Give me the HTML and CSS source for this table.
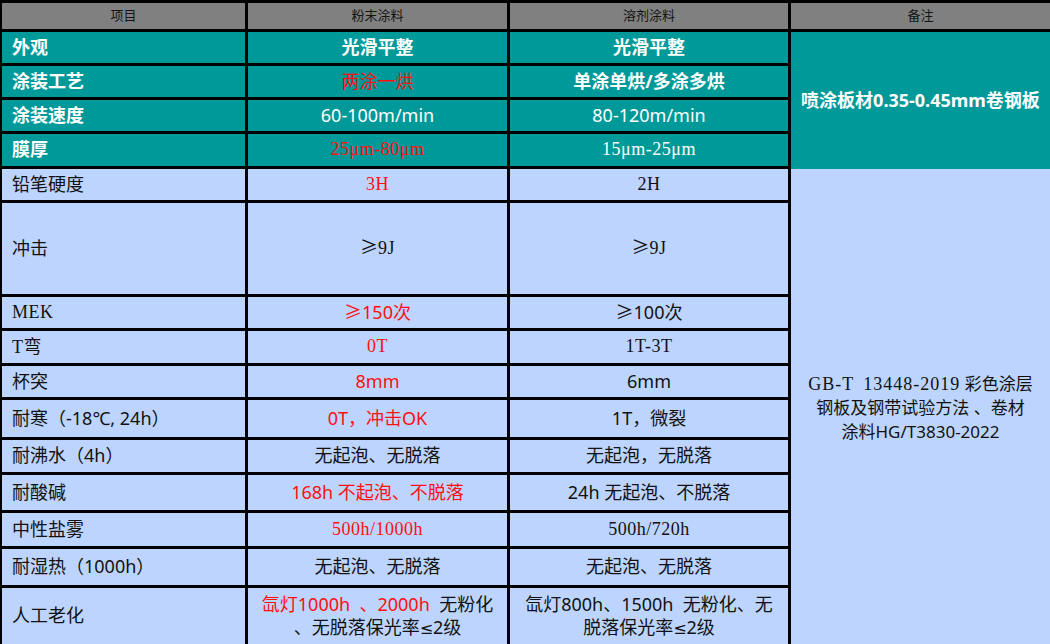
FILE: index.html
```html
<!DOCTYPE html>
<html lang="zh-CN">
<head>
<meta charset="utf-8">
<title>粉末涂料与溶剂涂料对比</title>
<link rel="stylesheet" href="styles.css">
</head>
<body>
<div class="sheet">
  <div class="cell head">项目</div>
  <div class="cell head">粉末涂料</div>
  <div class="cell head">溶剂涂料</div>
  <div class="cell head last">备注</div>

  <div class="cell note note-a">喷涂板材0.35-0.45mm卷钢板</div>
  <div class="cell note note-b"><span class="t"><span class="ss wide">GB-T 13448-2019</span> 彩色涂层<br>钢板及钢带试验方法 、卷材<br>涂料HG/T3830-2022</span></div>

  <div class="cell label teal">外观</div>
  <div class="cell val teal bold">光滑平整</div>
  <div class="cell val teal bold">光滑平整</div>

  <div class="cell label teal">涂装工艺</div>
  <div class="cell val teal red">两涂一烘</div>
  <div class="cell val teal bold">单涂单烘/多涂多烘</div>

  <div class="cell label teal">涂装速度</div>
  <div class="cell val teal">60-100m/min</div>
  <div class="cell val teal">80-120m/min</div>

  <div class="cell label teal">膜厚</div>
  <div class="cell val teal red ss">25μm-80μm</div>
  <div class="cell val teal ss">15μm-25μm</div>

  <div class="cell label">铅笔硬度</div>
  <div class="cell val red ss">3H</div>
  <div class="cell val ss">2H</div>

  <div class="cell label">冲击</div>
  <div class="cell val"><span class="t">≥<span class="ss">9J</span></span></div>
  <div class="cell val"><span class="t">≥<span class="ss">9J</span></span></div>

  <div class="cell label ss">MEK</div>
  <div class="cell val red">≥150次</div>
  <div class="cell val">≥100次</div>

  <div class="cell label"><span class="t"><span class="ss">T</span>弯</span></div>
  <div class="cell val red ss">0T</div>
  <div class="cell val ss">1T-3T</div>

  <div class="cell label">杯突</div>
  <div class="cell val red">8mm</div>
  <div class="cell val">6mm</div>

  <div class="cell label">耐寒（-18℃, 24h）</div>
  <div class="cell val red">0T，冲击OK</div>
  <div class="cell val">1T，微裂</div>

  <div class="cell label">耐沸水（4h）</div>
  <div class="cell val">无起泡、无脱落</div>
  <div class="cell val">无起泡，无脱落</div>

  <div class="cell label">耐酸碱</div>
  <div class="cell val red">168h 不起泡、不脱落</div>
  <div class="cell val">24h 无起泡、不脱落</div>

  <div class="cell label">中性盐雾</div>
  <div class="cell val red ss">500h/1000h</div>
  <div class="cell val ss">500h/720h</div>

  <div class="cell label">耐湿热（1000h）</div>
  <div class="cell val">无起泡、无脱落</div>
  <div class="cell val">无起泡、无脱落</div>

  <div class="cell label">人工老化</div>
  <div class="cell val multi"><span class="t"><span class="red">氙灯1000h &nbsp;、2000h</span> &nbsp;无粉化<br>、无脱落保光率<span class="le">≤</span>2级</span></div>
  <div class="cell val multi"><span class="t">氙灯800h、1500h &nbsp;无粉化、无<br>脱落保光率<span class="le">≤</span>2级</span></div>
</div>
</body>
</html>
```

FILE: styles.css
```css
* {
  box-sizing: border-box;
}

html, body {
  margin: 0;
  padding: 0;
  overflow: hidden;
  background: #ffffff;
}

body {
  font-family: "Noto Sans", "Noto Sans CJK SC", sans-serif;
  color: #111111;
}

.sheet {
  width: 1050px;
  display: grid;
  grid-template-columns: 246px 262px 281px 259px;
  grid-template-rows: 29px 34px 34px 34px 35px 34px 94px 34px 35px 34px 40px 35px 38px 36px 39px 59px;
  border-top: 3px solid #000;
  border-left: 2px solid #000;
  background: #bdd5fe;
}

.cell {
  border-right: 3px solid #000;
  border-bottom: 3px solid #000;
  display: flex;
  align-items: center;
  font-size: 18px;
  line-height: 1.2;
  white-space: nowrap;
  background: #bdd5fe;
}

.head {
  background: #808080;
  justify-content: center;
  font-size: 13px;
  color: #141414;
}

.last,
.note {
  border-right: none;
}

.label {
  padding-left: 10px;
}

.val {
  justify-content: center;
  text-align: center;
}

.t {
  display: block;
}

.teal {
  background: #009999;
  color: #ffffff;
}

.teal.label {
  font-weight: 700;
}

.bold {
  font-weight: 700;
}

.red,
.teal.red {
  color: #ff0f0f;
}

.ss {
  font-family: "Liberation Serif", "Noto Sans CJK SC", serif;
  font-size: 18px;
  letter-spacing: 0.5px;
}

.ss.wide {
  letter-spacing: 1px;
  word-spacing: 4px;
}

.le {
  font-family: "DejaVu Sans", sans-serif;
  font-size: 16px;
}

.note {
  justify-content: center;
  text-align: center;
}

.note-a {
  grid-column: 4;
  grid-row: 2 / 6;
  background: #009999;
  color: #ffffff;
  font-weight: 700;
  font-size: 18px;
  border-bottom: none;
}

.note-b {
  grid-column: 4;
  grid-row: 6 / 17;
  font-size: 17px;
  line-height: 24px;
  border-bottom: none;
}

.multi {
  line-height: 23px;
  font-size: 18px;
}
```
